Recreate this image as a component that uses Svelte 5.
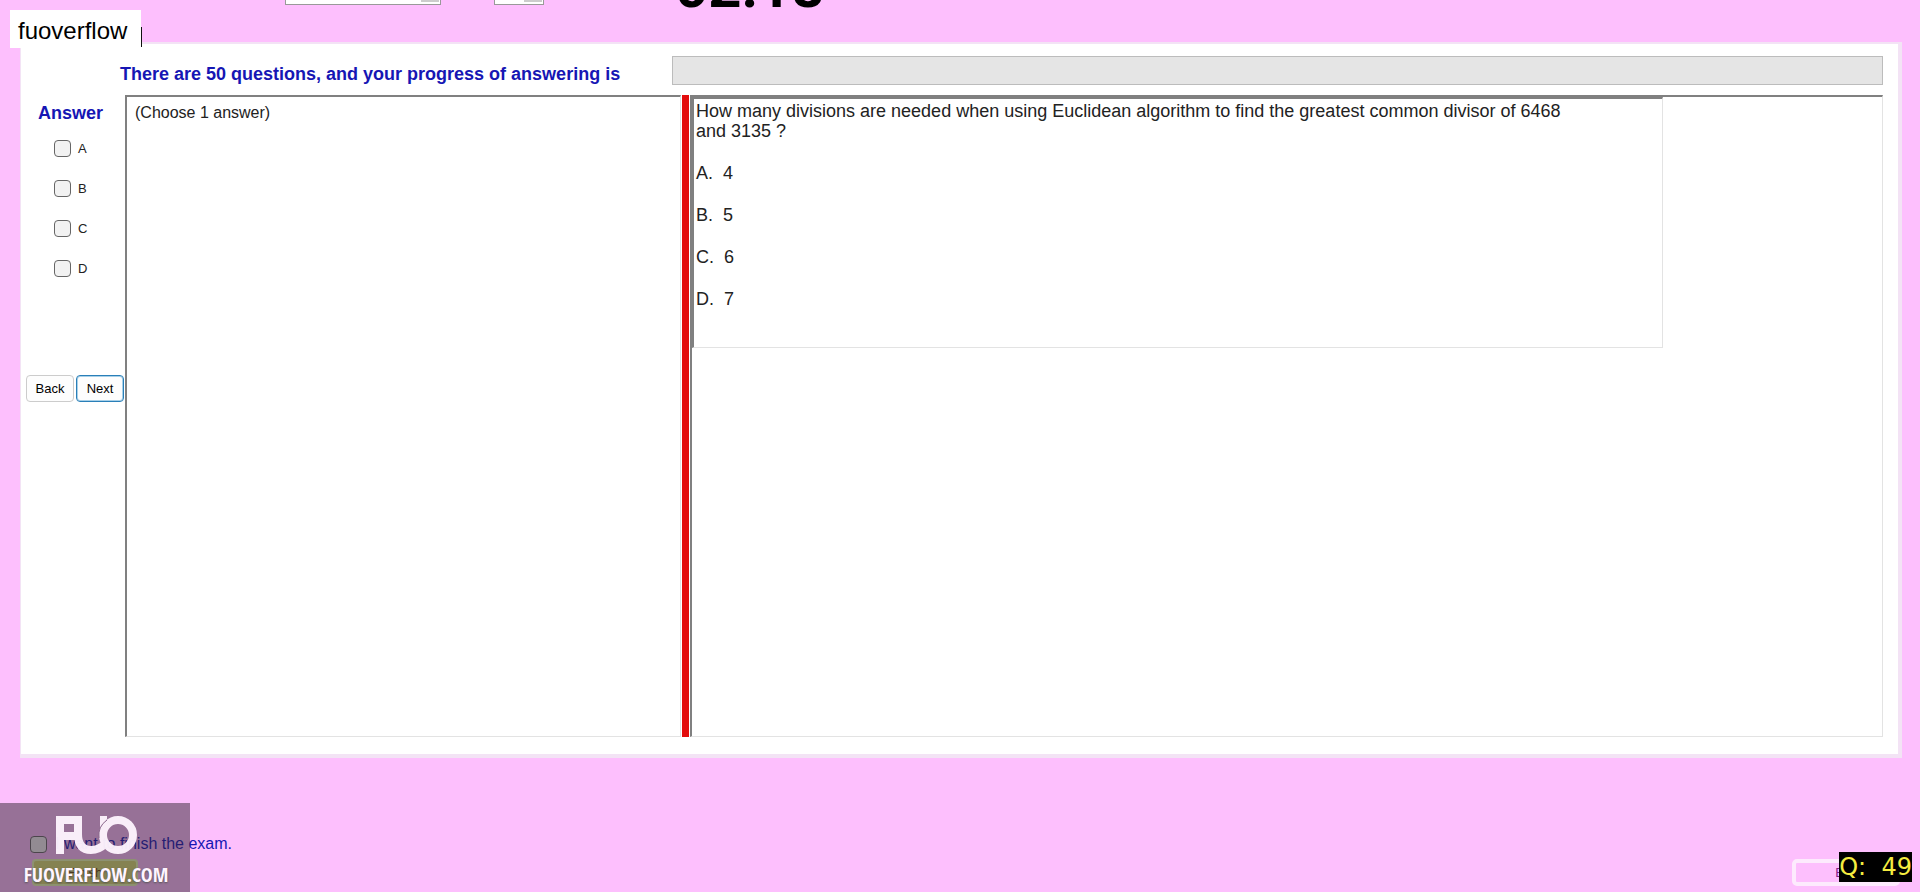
<script>
	const questionCount = 50;
	const choices = ['A', 'B', 'C', 'D'];
	const options = ['A.  4', 'B.  5', 'C.  6', 'D.  7'];

	let picked = $state([]);
	let finished = $state(false);
</script>

<main class="exam">
	<header class="toolbar">
		<select class="font-select" aria-label="Font"><option></option></select>
		<select class="size-select" aria-label="Size"><option></option></select>
		<div class="timer">02:18</div>
	</header>

	<section class="panel">
		<div class="progress-row">
			<h1>There are {questionCount} questions, and your progress of answering is</h1>
			<div class="progress" role="progressbar" aria-label="Progress" aria-valuenow="0"></div>
		</div>

		<div class="body-row">
			<aside class="answers">
				<h2>Answer</h2>
				{#each choices as choice}
					<label class="choice">
						<input type="checkbox" value={choice} bind:group={picked} />
						{choice}
					</label>
				{/each}
				<div class="nav">
					<button>Back</button>
					<button class="active">Next</button>
				</div>
			</aside>

			<div class="pane hint">(Choose 1 answer)</div>
			<div class="splitter"></div>
			<div class="pane">
				<article class="question">
					<p>How many divisions are needed when using Euclidean algorithm to find the greatest common divisor of 6468 and 3135 ?</p>
					{#each options as option}
						<p>{option}</p>
					{/each}
				</article>
			</div>
		</div>
	</section>

	<footer class="footer">
		<div class="finish">
			<label>
				<input type="checkbox" bind:checked={finished} />
				I want to finish the exam.
			</label>
			<button class="finish-btn">Finish</button>
		</div>
		<button class="exit-btn">Exit</button>
	</footer>

	<div class="tag">fuoverflow</div>

	<div class="watermark">
		<svg width="81" height="38" viewBox="0 0 81 38" fill="none" stroke="#fff5ff" aria-hidden="true">
			<path d="M4 38V0M0 4H26M4 20H20" stroke-width="8" />
			<path d="M22 0V18Q22 34 35 34Q43 34 49 28" stroke-width="8" />
			<path d="M45 0V9L50 3V0Z" fill="#fff5ff" stroke-width="2" />
			<circle cx="62" cy="19" r="15" stroke-width="8" />
			<path d="M43 22A19 19 0 0 1 51 4" stroke="#8d6a8f" stroke-width="1" />
		</svg>
		<span>FUOVERFLOW.COM</span>
	</div>

	<div class="counter">{'Q:  49'}</div>
</main>

<style>
	:global(body) {
		margin: 0;
		background: #fdbffd;
		font-family: "Liberation Sans", Arial, sans-serif;
	}

	.exam {
		position: relative;
		min-height: 100vh;
		display: flex;
		flex-direction: column;
		overflow: hidden;
	}

	h1, h2, p {
		margin: 0;
	}

	input[type="checkbox"] {
		appearance: none;
		box-sizing: border-box;
		width: 17px;
		height: 17px;
		margin: 0;
		border: 1px solid #666;
		border-radius: 4px;
		background: #f2f2f2;
	}

	button {
		font: inherit;
	}

	/* toolbar is scrolled mostly out of view */
	.toolbar {
		display: flex;
		align-items: flex-end;
		height: 5px;
		margin-bottom: 37px;
		padding-left: 285px;
	}

	.toolbar select {
		appearance: none;
		box-sizing: border-box;
		height: 24px;
		border: 1px solid #999;
		border-radius: 0;
		background: linear-gradient(#ccc, #ccc) right 1px top 0 / 18px 20px no-repeat #fff;
	}

	.toolbar .font-select {
		width: 156px;
		margin-right: 53px;
	}

	.toolbar .size-select {
		width: 50px;
	}

	.timer {
		margin-left: 131px;
		margin-bottom: -8px;
		font-family: Roboto, sans-serif;
		font-size: 58px;
		font-weight: bold;
		line-height: 52px;
	}

	.panel {
		margin: 0 18px 0 20px;
		padding: 12px 15px 17px 0;
		border: 4px solid #f3e3f5;
		border-top-width: 2px;
		border-left-width: 1px;
		background: #fff;
	}

	.progress-row {
		display: grid;
		grid-template-columns: 552px 1fr;
		align-items: start;
		height: 39px;
		padding-left: 99px;
	}

	h1, h2 {
		font-size: 18px;
		line-height: 20px;
		color: #1616b4;
		white-space: nowrap;
	}

	h1 {
		padding-top: 8px;
	}

	.progress {
		height: 27px;
		border: 1px solid #bcbcbc;
		background: #e5e5e5;
	}

	.body-row {
		display: flex;
		align-items: stretch;
		height: 642px;
	}

	.answers {
		flex: 0 0 104px;
		display: flex;
		flex-direction: column;
	}

	h2 {
		padding: 8px 0 15px 17px;
	}

	.choice {
		display: flex;
		align-items: center;
		gap: 7px;
		height: 20px;
		margin-bottom: 20px;
		padding-left: 33px;
		font-size: 13px;
		color: #222;
	}

	.nav {
		display: flex;
		gap: 2px;
		margin-top: 77px;
		padding-left: 5px;
	}

	.nav button {
		width: 48px;
		height: 27px;
		padding: 0;
		border: 1px solid #ccc;
		border-radius: 4px;
		background: #fdfdfd;
		font-size: 13px;
	}

	.nav .active {
		border: 1px solid #2a7fb8;
		box-shadow: inset 0 0 0 1px #a8d0e8;
	}

	.pane {
		flex: 1;
		border: 1px solid #e3e3e3;
		border-top: 2px solid #808080;
		border-left: 2px solid #808080;
	}

	.hint {
		flex: 0 0 556px;
		box-sizing: border-box;
		padding: 6px 8px;
		font-size: 16px;
		line-height: 20px;
		color: #222;
	}

	.splitter {
		width: 7px;
		margin: 0 1px;
		background: #e30d0d;
	}

	.question {
		max-width: 968px;
		height: 246px;
		padding-top: 2px;
		border: 1px solid #e3e3e3;
		border-top: 2px solid #808080;
		border-left: 2px solid #808080;
	}

	.question p {
		max-width: 890px;
		margin: 0 0 22px 2px;
		font-size: 18px;
		line-height: 20px;
		white-space: pre-wrap;
		color: #222;
	}

	.footer {
		display: flex;
		justify-content: space-between;
		align-items: flex-end;
		padding: 75px 20px 0 30px;
	}

	.finish label {
		display: flex;
		align-items: center;
		gap: 8px;
		font-size: 16px;
		line-height: 22px;
		color: #1616b4;
	}

	.finish-btn {
		width: 106px;
		height: 27px;
		margin: 4px 0 0 2px;
		border: 2px solid #e8ffb0;
		border-radius: 4px;
		background: #d8e070;
		font-size: 13px;
		color: #604000;
	}

	.exit-btn {
		width: 108px;
		height: 27px;
		border: 4px solid #fdeafd;
		border-radius: 5px;
		background: #fdbffd;
		font-size: 13px;
		line-height: 16px;
		color: #82208a;
	}

	.tag {
		position: absolute;
		top: 10px;
		left: 10px;
		width: 131px;
		box-sizing: border-box;
		padding: 7px 8px 3px;
		background: #fff;
		font-size: 24px;
		line-height: 28px;
	}

	.tag::after {
		content: "";
		position: absolute;
		right: -1px;
		bottom: 1px;
		width: 1px;
		height: 20px;
		background: #111;
	}

	.watermark {
		position: absolute;
		left: 0;
		bottom: 0;
		display: flex;
		flex-direction: column;
		align-items: center;
		width: 190px;
		height: 89px;
		box-sizing: border-box;
		padding: 13px 0 0 2px;
		background: rgba(50, 36, 50, 0.5);
		color: #fff5ff;
	}

	.watermark svg {
		opacity: 0.95;
	}

	.watermark span {
		margin-top: 9px;
		font-family: "Open Sans Condensed", "Roboto Condensed", "DejaVu Sans Condensed", sans-serif;
		font-size: 20px;
		font-weight: 800;
		line-height: 24px;
		text-shadow: 0 1px 2px #555;
	}

	.counter {
		position: absolute;
		right: 8px;
		bottom: 10px;
		height: 30px;
		background: #000;
		font-family: "DejaVu Sans", sans-serif;
		font-size: 24px;
		line-height: 30px;
		white-space: pre;
		color: #f5ec40;
	}
</style>
